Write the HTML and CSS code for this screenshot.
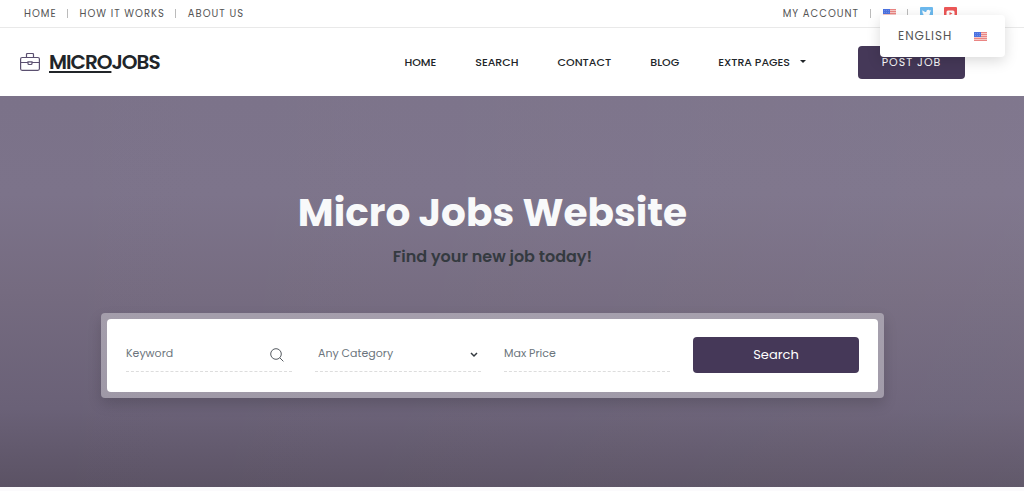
FILE: index.html
```html
<!DOCTYPE html>
<html lang="en">
<head>
    <meta charset="UTF-8">
    <meta name="viewport" content="width=device-width, initial-scale=1.0">
    <title>Micro Jobs Website</title>
    <link rel="stylesheet" href="styles.css">
</head>
<body>
    <!-- Flag shared by the top bar and the language menu -->
    <svg class="sprite" aria-hidden="true">
        <symbol id="flag-us" viewBox="0 0 13 9">
            <rect width="13" height="9" fill="#f6c9c6"/>
            <path d="M0 .5h13M0 2.5h13M0 4.5h13M0 6.5h13M0 8.5h13" stroke="#ea8583"/>
            <rect width="7" height="5" fill="#4c72e0"/>
            <path d="M1 1.5h5M1 3.5h5" stroke="#86a3f0" stroke-width=".6" stroke-dasharray="1 1"/>
        </symbol>
    </svg>

    <div class="topbar">
        <div class="container topbar-inner">
            <nav class="top-links">
                <a href="#">HOME</a>
                <a href="#">HOW IT WORKS</a>
                <a href="#">ABOUT US</a>
            </nav>
            <div class="top-links top-right">
                <a href="#">MY ACCOUNT</a>
                <div class="lang">
                    <button type="button" class="lang-toggle" aria-label="Language">
                        <svg class="flag"><use href="#flag-us"/></svg>
                    </button>
                    <a href="#" class="lang-menu">ENGLISH <svg class="flag"><use href="#flag-us"/></svg></a>
                </div>
                <div class="social">
                    <a href="#" aria-label="Twitter">
                        <svg width="13" height="13" viewBox="0 0 13 13">
                            <rect width="13" height="13" rx="1" fill="#6cb9ee"/>
                            <path d="M2.500 3.200c1.100 1.200 2.300 1.800 3.800 1.900 0-2.300 2.300-2.900 3.400-1.700l1.300-.5-.7 1.300.7-.1-.9 1c.1 4.300-4.200 6-7.800 4.200 1.100 0 1.800-.2 2.500-.8-.9-.1-1.500-.6-1.700-1.300h.8c-1-.4-1.500-1-1.500-1.900l.7.200c-.8-.7-1-1.400-.6-2.300z" fill="#fff"/>
                        </svg>
                    </a>
                    <a href="#" aria-label="YouTube">
                        <svg width="13" height="13" viewBox="0 0 13 13">
                            <rect width="13" height="13" rx="1" fill="#ec5757"/>
                            <rect x="2.500" y="3.500" width="8" height="6" rx="1.500" fill="#fff"/>
                            <path d="M5.500 5l3 1.500-3 1.500z" fill="#ec5757"/>
                        </svg>
                    </a>
                </div>
            </div>
        </div>
    </div>

    <header class="header">
        <div class="container header-inner">
            <a href="#" class="logo">
                <svg class="logo-icon" width="20" height="18" viewBox="0 0 20 18" fill="none" stroke="#5b5070" stroke-width="1.200">
                    <rect x=".6" y="4.500" width="18.800" height="12.800" rx="1.500"/>
                    <path d="M6.500 4.500v-3q0-1 1-1h5q1 0 1 1v3"/>
                    <path d="M1 9.500h6.500M12.500 9.500H19M8 8.900h4v1.600q0 1-1 1H9q-1 0-1-1z"/>
                </svg>
                <span><u>MICRO</u>JOBS</span>
            </a>
            <nav class="main-nav">
                <a href="#">HOME</a>
                <a href="#">SEARCH</a>
                <a href="#">CONTACT</a>
                <a href="#">BLOG</a>
                <a href="#" class="has-caret">EXTRA PAGES</a>
            </nav>
            <button type="button" class="btn btn-post">POST JOB</button>
        </div>
    </header>

    <main class="hero">
        <div class="container">
            <h1>Micro Jobs Website</h1>
            <p class="tagline">Find your new job today!</p>

            <div class="search-frame">
                <form class="search">
                    <div class="field">
                        <input type="text" placeholder="Keyword" aria-label="Keyword">
                        <svg class="field-icon" width="14" height="14" viewBox="0 0 14 14" fill="none" stroke="#555a60">
                            <circle cx="6" cy="6" r="5.300"/>
                            <path d="M9.800 9.800l3.600 3.600"/>
                        </svg>
                    </div>
                    <div class="field">
                        <select aria-label="Category">
                            <option>Any Category</option>
                        </select>
                        <svg class="field-icon chevron" width="8" height="6" viewBox="0 0 8 6" fill="none" stroke="#343a40" stroke-width="1.500">
                            <path d="M1 1l3 3 3-3"/>
                        </svg>
                    </div>
                    <div class="field">
                        <input type="text" placeholder="Max Price" aria-label="Max Price">
                    </div>
                    <button type="submit" class="btn btn-search">Search</button>
                </form>
            </div>
        </div>
    </main>
</body>
</html>
```
FILE: styles.css
```css
* {
    box-sizing: border-box;
}
body {
    margin: 0;
    font-family: Poppins, Inter, sans-serif;
    color: #212529;
    background: #fbfafc;
}
a {
    color: inherit;
    text-decoration: none;
}
button,
input,
select {
    font-family: inherit;
}
svg {
    display: block;
}
.sprite {
    display: none;
}
.container {
    padding: 0 59px 0 20px;
}

/* top bar */
.topbar {
    border-bottom: 1px solid #e9e9e9;
    font-size: 10px;
    line-height: 27px;
    letter-spacing: 1px;
    color: #555;
    background: #fff;
}
.topbar-inner {
    display: flex;
    justify-content: space-between;
    padding-left: 24px;
    padding-right: 67px;
}
.top-links {
    display: flex;
    align-items: center;
}
.top-links > * + * {
    display: flex;
    align-items: center;
}
.top-links > * + *::before {
    content: "";
    width: 1px;
    height: 9px;
    margin: 0 12px 0 10px;
    background: #bbb;
}
.lang {
    position: relative;
}
.top-links .lang::before,
.top-links .social::before {
    margin-left: 11px;
}
.lang-toggle {
    padding: 0;
    border: 0;
    background: none;
}
.flag {
    width: 13px;
    height: 9px;
}
.lang-menu {
    position: absolute;
    z-index: 10;
    top: 1px;
    left: 21px;
    display: flex;
    align-items: center;
    justify-content: space-between;
    width: 125px;
    margin-top: 5px;
    padding: 0 18px;
    font-size: 12px;
    line-height: 42px;
    background: #fff;
    border-radius: 4px;
    box-shadow: 0 4px 14px rgba(0, 0, 0, 0.15);
}
.social {
    display: flex;
}
.social a + a {
    margin-left: 11px;
}

/* header */
.header {
    background: #fff;
}
.header-inner {
    display: flex;
    align-items: center;
    height: 68px;
}
.logo {
    display: flex;
    align-items: center;
    gap: 9px;
    font-size: 20px;
    font-weight: 600;
    letter-spacing: -1px;
}
.logo u {
    text-decoration-thickness: 2px;
    text-underline-offset: 2px;
    text-decoration-skip-ink: none;
}
.main-nav {
    display: flex;
    gap: 39px;
    margin-left: auto;
    font-size: 11px;
    font-weight: 500;
}
.has-caret::after {
    content: "";
    display: inline-block;
    margin-left: 10px;
    vertical-align: 3px;
    border: 3px solid transparent;
    border-top-color: #212529;
    border-bottom: 0;
}
.btn {
    border: 0;
    border-radius: 4px;
    color: #fff;
    background: #453858;
    cursor: pointer;
}
.btn-post {
    width: 107px;
    height: 33px;
    margin-left: 52px;
    font-size: 11px;
    letter-spacing: 1px;
}

/* hero */
.hero {
    padding: 90px 0 89px;
    text-align: center;
    background:
        linear-gradient(to right, transparent, rgba(255, 255, 255, 0.04)),
        linear-gradient(#7b7289, #7c738a 25%, #756b80 50%, #6a6177 80%, #5b5264);
}
h1 {
    margin: 0;
    font-size: 39px;
    line-height: 54px;
    color: #f8f9fa;
}
.tagline {
    margin: 6px 0 46px;
    font-size: 16px;
    font-weight: 600;
    line-height: 21px;
    color: #343a40;
}
.search-frame {
    max-width: 783px;
    margin: 0 auto;
    padding: 6px;
    border-radius: 4px;
    background: rgba(255, 255, 255, 0.35);
    box-shadow: 0 6px 14px rgba(0, 0, 0, 0.15);
}
.search {
    display: grid;
    grid-template-columns: repeat(4, 1fr);
    align-items: start;
    gap: 23px;
    padding: 18px 19px 19px;
    border-radius: 4px;
    background: #fff;
}
.field {
    position: relative;
}
.field input,
.field select {
    display: block;
    width: 100%;
    height: 35px;
    padding: 0 0 2px;
    border: 0;
    border-bottom: 1px dashed #ddd;
    border-radius: 0;
    outline: 0;
    font-size: 11px;
    color: #6c757d;
    background: none;
    appearance: none;
}
.field select {
    padding-left: 3px;
}
.field input::placeholder {
    color: #6c757d;
}
.field-icon {
    position: absolute;
    top: 11px;
    right: 8px;
    pointer-events: none;
}
.chevron {
    top: 15px;
    right: 3px;
}
.btn-search {
    height: 36px;
    font-size: 13px;
}
```
